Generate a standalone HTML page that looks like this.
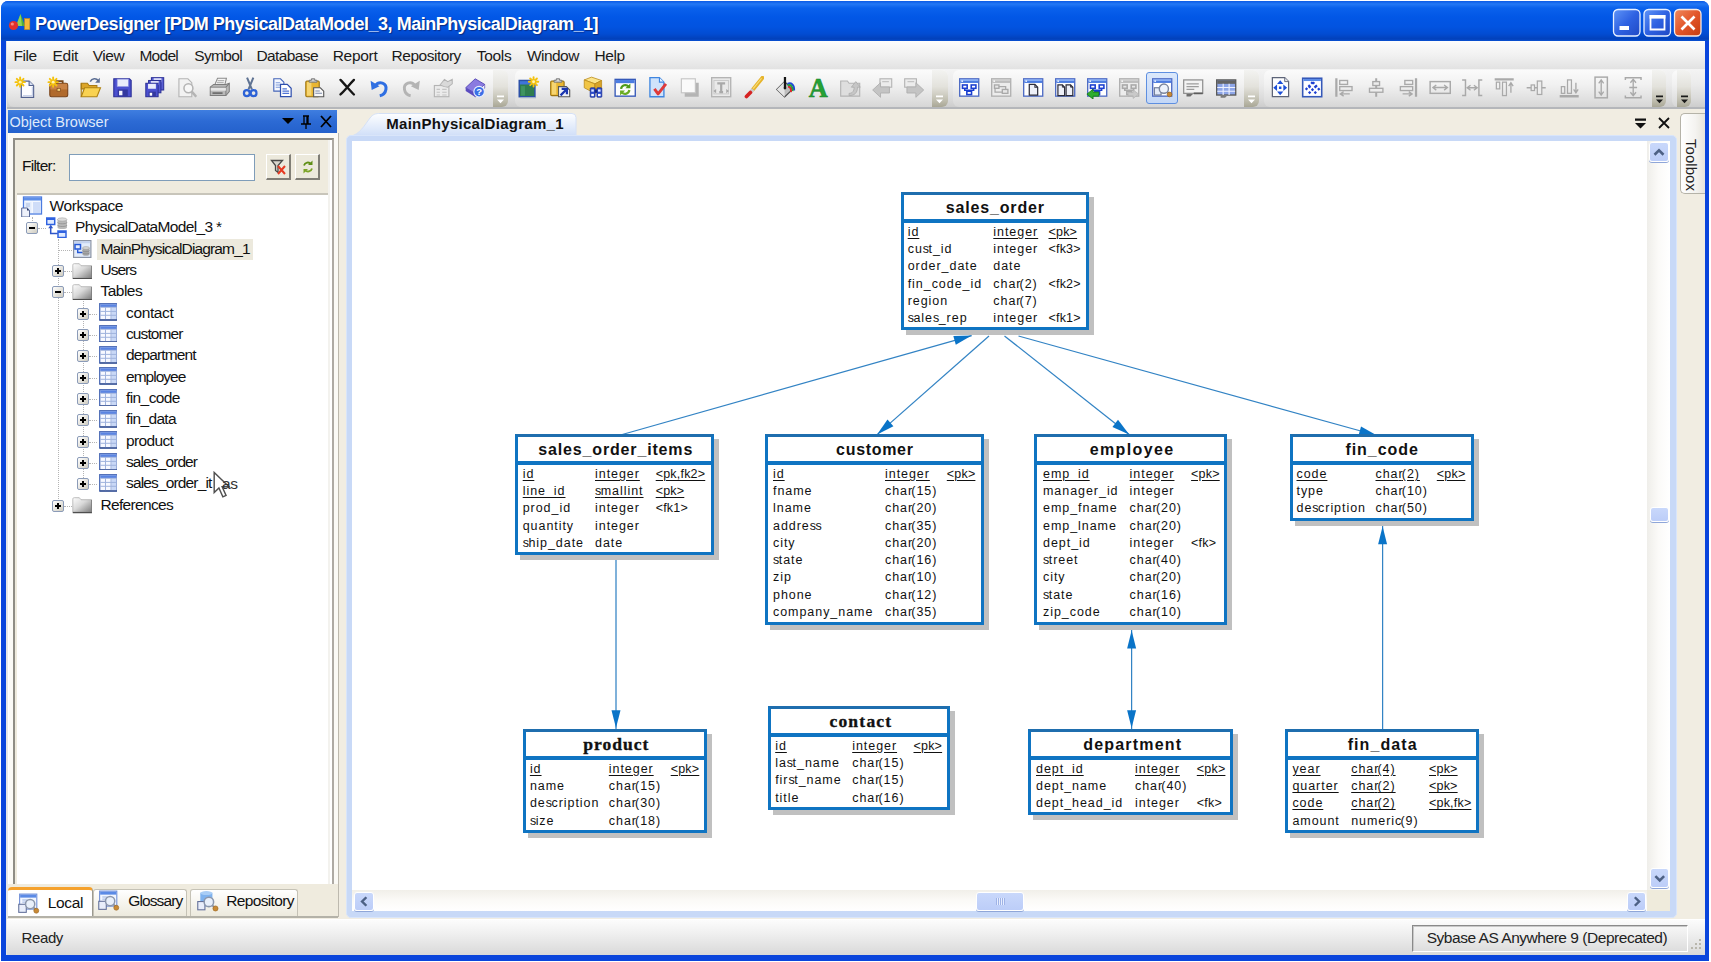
<!DOCTYPE html>
<html><head><meta charset="utf-8"><title>PowerDesigner</title>
<style>
*{box-sizing:border-box;margin:0;padding:0}
html,body{width:1711px;height:962px;overflow:hidden;background:#fff;font-family:"Liberation Sans",sans-serif;}
.a{position:absolute}
#win{position:absolute;left:1px;top:1px;width:1708px;height:959.5px;background:#0a45dc;border-radius:7px 7px 0 0;overflow:hidden}
#title{position:absolute;left:0;top:0;width:1708px;height:40px;background:linear-gradient(#0a5ae6 0px,#2478f4 3px,#0a61ec 7px,#0257e6 16px,#0253e0 26px,#024cd2 33px,#0240ba 38px,#0a52d4 40px);}
#title .t{position:absolute;left:34px;top:13px;font-weight:bold;font-size:18px;color:#fff;letter-spacing:-0.487px;white-space:nowrap;text-shadow:1px 1px 1px #0a2a80;}
#client{position:absolute;left:6px;top:40px;width:1698px;height:914px;background:#f1ede2}
#menu{position:absolute;left:0;top:0;width:1698px;height:28px;background:linear-gradient(#fdfdfd,#f1f1f1 50%,#e2e2e2);}
#menu span{position:absolute;top:6px;font-size:15.5px;color:#1a1a1a;white-space:nowrap;letter-spacing:-0.2px}
#tb{position:absolute;left:0;top:28px;width:1698px;height:40px;background:linear-gradient(#f4f4f4,#ebebeb 40%,#dcdcdc 75%,#cdcdcd);border-bottom:2px solid #b4b6ba}
.tbg{position:absolute;top:1px;height:37px;border-radius:6px;background:linear-gradient(#fbfbfb,#f1f1f1 40%,#e2e2e2 75%,#d6d6d6)}
.ovf{position:absolute;top:1px;height:37px;width:15px;border-radius:0 6px 6px 0;background:linear-gradient(#f3f3f1,#e3e2dc 45%,#c2c0b2 80%,#a9a796)}
</style></head><body>
<div id="win">
<div id="title">
<svg class="a" style="left:7px;top:11px" width="24" height="22" viewBox="0 0 24 22"><path d="M12.500 2l4.500 12h-9z" fill="#4fae3a"/><path d="M12.500 2l1.500 12h-6z" fill="#8fd45a"/><rect x="16.600" y="6.600" width="5.200" height="11" fill="#f5b93a" stroke="#c98a1a" stroke-width=".6"/><circle cx="5.500" cy="13.500" r="4.600" fill="#e0302c"/><circle cx="4.300" cy="12" r="1.600" fill="#f58a80"/></svg>
<svg class="a" style="left:1611px;top:7px" width="94" height="32" viewBox="0 0 94 32"><defs><linearGradient id="bb" x1="0" y1="0" x2="1" y2="1"><stop offset="0" stop-color="#5f95f8"/><stop offset=".5" stop-color="#2f62e2"/><stop offset="1" stop-color="#1f49c4"/></linearGradient><linearGradient id="rb" x1="0" y1="0" x2="1" y2="1"><stop offset="0" stop-color="#f08a5e"/><stop offset=".5" stop-color="#e2562a"/><stop offset="1" stop-color="#c63c10"/></linearGradient></defs>
<rect x="1.500" y="1.500" width="26.500" height="26.500" rx="4.500" fill="url(#bb)" stroke="#e9f1ff" stroke-width="1.300"/><rect x="7.500" y="18" width="9.500" height="4" fill="#fff"/>
<rect x="32" y="1.500" width="26.500" height="26.500" rx="4.500" fill="url(#bb)" stroke="#e9f1ff" stroke-width="1.300"/><path d="M38.500 8h14v13.500h-14z" fill="none" stroke="#fff" stroke-width="1.800"/><rect x="37.600" y="7" width="15.800" height="3.600" fill="#fff"/>
<rect x="62.500" y="1.500" width="26.500" height="26.500" rx="4.500" fill="url(#rb)" stroke="#f8ece6" stroke-width="1.300"/><path d="M69.500 8.500l13 13M82.500 8.500l-13 13" stroke="#fff" stroke-width="2.700"/></svg>
<div class="t" id="ttext">PowerDesigner [PDM PhysicalDataModel_3, MainPhysicalDiagram_1]</div></div>
<div id="client">
<div class="a" style="left:-1px;top:0;width:2px;height:914px;background:#e6e6e6"></div>
<div id="menu">
<span style="left:6.5px;letter-spacing:-0.421px">File</span><span style="left:45.4px;letter-spacing:-0.23px">Edit</span><span style="left:85.8px;letter-spacing:-0.507px">View</span><span style="left:132.4px;letter-spacing:-0.704px">Model</span><span style="left:187.2px;letter-spacing:-0.615px">Symbol</span><span style="left:249.5px;letter-spacing:-0.607px">Database</span><span style="left:325.7px;letter-spacing:-0.305px">Report</span><span style="left:384.5px;letter-spacing:-0.469px">Repository</span><span style="left:469.8px;letter-spacing:-0.318px">Tools</span><span style="left:519.9px;letter-spacing:-0.523px">Window</span><span style="left:587.6px;letter-spacing:-0.473px">Help</span></div>
<div id="tb">
<div class="tbg" style="left:1px;width:499px"></div><div class="tbg" style="left:508px;width:432.5px"></div><div class="tbg" style="left:946px;width:305.5px"></div><div class="tbg" style="left:1257px;width:402px"></div><div class="tbg" style="left:1665px;width:19px"></div><div class="ovf" style="left:486px;width:14.5px"><svg width="15" height="12" viewBox="0 0 15 12" style="position:absolute;left:0;bottom:2px"><path d="M4 2.500h7v1.800h-7zM4 6.500h7l-3.500 3.800z" fill="#fff"/></svg></div><div class="ovf" style="left:925px;width:15.5px"><svg width="15" height="12" viewBox="0 0 15 12" style="position:absolute;left:0;bottom:2px"><path d="M4 2.500h7v1.800h-7zM4 6.500h7l-3.500 3.800z" fill="#fff"/></svg></div><div class="ovf" style="left:1236.5px;width:15.0px"><svg width="15" height="12" viewBox="0 0 15 12" style="position:absolute;left:0;bottom:2px"><path d="M4 2.500h7v1.800h-7zM4 6.500h7l-3.500 3.800z" fill="#fff"/></svg></div><div class="ovf" style="left:1644.5px;width:14.5px"><svg width="15" height="12" viewBox="0 0 15 12" style="position:absolute;left:0;bottom:2px"><path d="M4 2.500h7v1.800h-7zM4 6.500h7l-3.500 3.800z" fill="#1a1a1a"/></svg></div><div class="ovf" style="left:1669.5px;width:14.5px"><svg width="15" height="12" viewBox="0 0 15 12" style="position:absolute;left:0;bottom:2px"><path d="M4 2.500h7v1.800h-7zM4 6.500h7l-3.500 3.800z" fill="#1a1a1a"/></svg></div><div class="a" style="left:1138.5px;top:3px;width:32px;height:32px;border:1.5px solid #5e8fe0;border-radius:3px;background:linear-gradient(#dbe8fb,#c3d7f7)"></div><svg class="a" style="left:7.300000000000001px;top:7.3px" width="22.4" height="22.4" viewBox="0 0 20 20"><path d="M6.5 4.5h7l4 4v10.5h-11z" fill="#fdfdff" stroke="#53628f" stroke-width="1.1"/><path d="M13.5 4.5v4h4" fill="#d8e0f2" stroke="#53628f" stroke-width="1"/><path d="M8 17.5h8.5v-8" stroke="#c9d2e8" stroke-width="1.2" fill="none"/><g stroke="#f4c20d" stroke-width="1.7" stroke-linecap="round"><path d="M5.5 1.2999999999999998V9.7M1.2999999999999998 5.5H9.7M2.5 2.5L8.5 8.5M8.5 2.5L2.5 8.5"/></g><circle cx="5.5" cy="5.5" r="1.3" fill="#fff3b0"/></svg><svg class="a" style="left:40.3px;top:7.3px" width="22.4" height="22.4" viewBox="0 0 20 20"><path d="M7.5 7V4.6h6.5V7" stroke="#7a4a1c" stroke-width="1.6" fill="none"/><rect x="2.5" y="6.5" width="16" height="12" rx="1.5" fill="#b06a2c" stroke="#7a441a" stroke-width="1"/><rect x="3" y="7" width="15" height="5" fill="#c98346"/><rect x="9" y="11" width="3" height="2.6" fill="#f3d27a" stroke="#7a441a" stroke-width=".6"/><g stroke="#f4c20d" stroke-width="1.7" stroke-linecap="round"><path d="M5.5 1.2999999999999998V9.7M1.2999999999999998 5.5H9.7M2.5 2.5L8.5 8.5M8.5 2.5L2.5 8.5"/></g><circle cx="5.5" cy="5.5" r="1.3" fill="#fff3b0"/></svg><svg class="a" style="left:72.3px;top:7.3px" width="22.4" height="22.4" viewBox="0 0 20 20"><path d="M2 6.5h5.5l1.5 2H16v3H2z" fill="#dca528" stroke="#a97a10" stroke-width=".9"/><path d="M2 18.5l3-8h14.2l-3.2 8z" fill="#f9d251" stroke="#b08312" stroke-width="1"/><path d="M2 18.5v-12" stroke="#a97a10" stroke-width="1"/><path d="M10 5c1.5-3 5.5-3.4 7.3-.7" stroke="#5d6f94" stroke-width="1.4" fill="none"/><path d="M18.6 1.6v4.4h-4.2z" fill="#5d6f94"/></svg><svg class="a" style="left:104.3px;top:7.3px" width="22.4" height="22.4" viewBox="0 0 20 20"><path d="M2.5 2.5h14l1.5 1.5v14.5h-15.5z" fill="#4b50cf" stroke="#2b2f96" stroke-width="1"/><rect x="5.5" y="2.8" width="10" height="6.7" fill="#e9ebfb" stroke="#8d92e0" stroke-width=".6"/><rect x="6" y="12" width="9" height="6.3" fill="#33389f"/><rect x="7.2" y="13.2" width="3" height="4" fill="#f4f4ff"/></svg><svg class="a" style="left:136.3px;top:7.3px" width="22.4" height="22.4" viewBox="0 0 20 20"><rect x="7.5" y="1.5" width="11" height="11" fill="#5a5fd4" stroke="#2b2f96" stroke-width=".9"/><rect x="9.5" y="2" width="7" height="3.6" fill="#dfe1fa"/><rect x="5" y="4" width="11" height="11" fill="#5257d0" stroke="#2b2f96" stroke-width=".9"/><rect x="7" y="4.5" width="7" height="3.6" fill="#dfe1fa"/><rect x="2.5" y="6.5" width="11" height="12" fill="#4b50cf" stroke="#2b2f96" stroke-width=".9"/><rect x="4.5" y="7" width="7" height="4.4" fill="#e9ebfb"/><rect x="5" y="14" width="6.5" height="4.3" fill="#33389f"/><rect x="6" y="15" width="2.2" height="2.6" fill="#fff"/></svg><svg class="a" style="left:168.3px;top:7.3px" width="22.4" height="22.4" viewBox="0 0 20 20"><path d="M3.5 2.5h8l3.5 3.5v12.5h-11.5z" fill="#f2f2f2" stroke="#b4b4b4" stroke-width="1"/><circle cx="12" cy="11" r="4" fill="#f7f7f7" stroke="#b4b4b4" stroke-width="1.4"/><path d="M15 14l4 4.5" stroke="#b4b4b4" stroke-width="2.2"/></svg><svg class="a" style="left:200.8px;top:7.3px" width="22.4" height="22.4" viewBox="0 0 20 20"><path d="M6 8l2.5-6h8l-1.5 6z" fill="#f4f4f4" stroke="#8a8a8a" stroke-width=".9"/><path d="M8.5 4.2h6M8 6h6" stroke="#9a9a9a" stroke-width=".8"/><path d="M2 10l3-2.5h11l3 -1v7.5l-3 3.5h-14z" fill="#b9b9b9" stroke="#7d7d7d" stroke-width=".9"/><path d="M2 10h14v7.5M16 10l3-3.4" stroke="#7d7d7d" stroke-width=".9" fill="none"/><rect x="2.5" y="10.5" width="13.5" height="2.6" fill="#e6e6e6"/><rect x="4" y="14.5" width="9" height="1.6" fill="#6f6f6f"/></svg><svg class="a" style="left:232.3px;top:7.3px" width="22.4" height="22.4" viewBox="0 0 20 20"><path d="M7.2 1.5l4.3 10.5M12.8 1.5L8.5 12" stroke="#5f7393" stroke-width="1.8" fill="none"/><circle cx="7" cy="15.3" r="2.6" fill="none" stroke="#2d62d6" stroke-width="2"/><circle cx="13" cy="15.3" r="2.6" fill="none" stroke="#2d62d6" stroke-width="2"/></svg><svg class="a" style="left:264.3px;top:7.3px" width="22.4" height="22.4" viewBox="0 0 20 20"><path d="M2.5 2.5h6l3 3v8h-9z" fill="#f5f8ff" stroke="#4464b8" stroke-width="1"/><path d="M4.2 6h4M4.2 8h5M4.2 10h5" stroke="#7f9ada" stroke-width=".9"/><path d="M8.5 7.5h6l3.5 3.5v7.5h-9.5z" fill="#fff" stroke="#2f4fae" stroke-width="1.1"/><path d="M10.2 11.5h4M10.2 13.5h6M10.2 15.5h6" stroke="#4f74d6" stroke-width="1"/></svg><svg class="a" style="left:296.3px;top:7.3px" width="22.4" height="22.4" viewBox="0 0 20 20"><rect x="2.5" y="4.5" width="12" height="14" rx="1" fill="#e9b632" stroke="#9c7412" stroke-width="1"/><rect x="3.5" y="5.5" width="4" height="12" fill="#f6d572"/><path d="M5.5 5.5V3.8h2V2.5h3v1.3h2v1.7z" fill="#d0d0d0" stroke="#6e6e6e" stroke-width=".8"/><path d="M9.5 10.5h6l3 3v5h-9z" fill="#f8f8f8" stroke="#585858" stroke-width="1"/><path d="M11 13.5h4M11 15.5h6" stroke="#7b88a8" stroke-width=".9"/></svg><svg class="a" style="left:329.3px;top:7.3px" width="22.4" height="22.4" viewBox="0 0 20 20"><path d="M4 3.5c4 4 8 9 12 13M16 3.5C11.500 8 8 13 4 16.500" stroke="#161616" stroke-width="2.1" fill="none" stroke-linecap="round"/></svg><svg class="a" style="left:361.3px;top:7.3px" width="22.4" height="22.4" viewBox="0 0 20 20"><path d="M6.5 8.500c3.500-4.500 10.500-2.500 9.500 3.500c-.5 3-2.700 5-5.500 5.600" stroke="#2f6fe2" stroke-width="2.7" fill="none"/><path d="M2.300 4.200l1 8.200l7-3.300z" fill="#2f6fe2"/></svg><svg class="a" style="left:392.8px;top:7.3px" width="22.4" height="22.4" viewBox="0 0 20 20"><path d="M13.500 8.500c-3.500-4.500-10.500-2.500-9.500 3.500c.5 3 2.700 5 5.500 5.600" stroke="#b4b4b4" stroke-width="2.600" fill="none"/><path d="M17.700 4.200l-1 8.200l-7-3.300z" fill="#b4b4b4"/></svg><svg class="a" style="left:424.3px;top:7.3px" width="22.4" height="22.4" viewBox="0 0 20 20"><rect x="3" y="8.500" width="13" height="10" fill="#ebebeb" stroke="#b4b4b4" stroke-width="1"/><path d="M5 12h3M10 12h4M5 14.500h3M10 14.500h4M5 17h3M10 17h4" stroke="#c4c4c4" stroke-width="1"/><path d="M8 8l4-5 3 2 4-2v4l-4 3-3-.5z" fill="#d9d9d9" stroke="#b4b4b4" stroke-width=".9"/></svg><svg class="a" style="left:457.3px;top:7.3px" width="22.4" height="22.4" viewBox="0 0 20 20"><path d="M1.500 10.500l8.500-8 8.500 5-8.500 8z" fill="#8a7be0" stroke="#5546b4" stroke-width=".8"/><path d="M1.500 10.500v2.800l8.500 5.500v-3.300z" fill="#5b4cc0"/><path d="M10 15.500v3.300l8.500-8v-3.300z" fill="#efeefa" stroke="#5546b4" stroke-width=".6"/><circle cx="13.500" cy="14" r="4.700" fill="#3b6fe6" stroke="#e8efff" stroke-width="1"/><text x="13.500" y="17.300" font-family="Liberation Sans,sans-serif" font-weight="bold" font-size="8.500" fill="#fff" text-anchor="middle">?</text></svg><svg class="a" style="left:510.29999999999995px;top:7.3px" width="22.4" height="22.4" viewBox="0 0 20 20"><rect x="2" y="4" width="14" height="14.500" fill="#2f7d4f" stroke="#2b4fa8" stroke-width="1.3"/><rect x="2.600" y="4.600" width="12.800" height="3" fill="#3f73dc"/><rect x="3.600" y="9" width="3.500" height="8.500" fill="#3f9461"/><path d="M3 19.300h14" stroke="#9fb0c8" stroke-width="1"/><g stroke="#f4c20d" stroke-width="1.7" stroke-linecap="round"><path d="M14.8 1.0V9.4M10.600000000000001 5.2H19.0M11.8 2.2L17.8 8.2M17.8 2.2L11.8 8.2"/></g><circle cx="14.8" cy="5.2" r="1.3" fill="#fff3b0"/></svg><svg class="a" style="left:542.3px;top:7.3px" width="22.4" height="22.4" viewBox="0 0 20 20"><rect x="1.500" y="4.500" width="12" height="13" rx="1" fill="#e9b632" stroke="#9c7412" stroke-width="1"/><rect x="2.500" y="5.500" width="4" height="11" fill="#f6d572"/><path d="M4.500 5.500V3.800h2V2.500h3v1.300h2v1.700z" fill="#d8d8d8" stroke="#6e6e6e" stroke-width=".8"/><path d="M8.500 9.500h7l3 3v6h-10z" fill="#eef1f8" stroke="#585858" stroke-width="1"/><path d="M10.300 17.300l5.500-5.500M11.300 11.500h4.700v4.700" stroke="#1b36b0" stroke-width="2" fill="none"/></svg><svg class="a" style="left:575.3px;top:7.3px" width="22.4" height="22.4" viewBox="0 0 20 20"><path d="M2 3.500l6.500-2.500 9 3-6 3z" fill="#fbe48a" stroke="#b8891a" stroke-width=".7"/><path d="M2 3.500v7l9.500 5v-8.500z" fill="#f1c545" stroke="#b8891a" stroke-width=".7"/><path d="M11.500 7l6-3v7.500l-6 4z" fill="#d9a428" stroke="#b8891a" stroke-width=".7"/><rect x="7.300" y="10.500" width="4.400" height="8.500" rx=".8" fill="#2b4bcb" stroke="#16288a" stroke-width=".6"/><rect x="13.300" y="10.500" width="4.400" height="8.500" rx=".8" fill="#2b4bcb" stroke="#16288a" stroke-width=".6"/><rect x="11.500" y="12" width="2" height="3" fill="#16288a"/><rect x="8.300" y="12" width="2.300" height="2" fill="#dfe8ff"/><rect x="14.300" y="12" width="2.300" height="2" fill="#dfe8ff"/><rect x="8.300" y="16" width="2.300" height="2" fill="#fff"/><rect x="14.300" y="16" width="2.300" height="2" fill="#fff"/></svg><svg class="a" style="left:607.3px;top:7.3px" width="22.4" height="22.4" viewBox="0 0 20 20"><rect x="1" y="3" width="18" height="15" fill="#fdfdfd" stroke="#3558b8" stroke-width="1.2"/><rect x="1.600" y="3.600" width="16.800" height="2.800" fill="#4b7ce2"/><path d="M6.300 11.500a3.900 3.900 0 0 1 6.700-2.200" stroke="#4f9a1a" stroke-width="2" fill="none"/><path d="M14.600 6.600v4.400h-4.400z" fill="#4f9a1a"/><path d="M13.700 12.500a3.900 3.900 0 0 1-6.700 2.200" stroke="#6aac22" stroke-width="2" fill="none"/><path d="M5.400 17.400v-4.400h4.400z" fill="#6aac22"/></svg><svg class="a" style="left:639.3px;top:7.3px" width="22.4" height="22.4" viewBox="0 0 20 20"><path d="M3.500 1.500h8.500l4 4v13h-12.500z" fill="#cfe2fb" stroke="#3f86e0" stroke-width="1.200"/><path d="M12 1.500v4h4" fill="#eaf3ff" stroke="#3f86e0" stroke-width="1"/><path d="M7.500 11.500l3.300 4.500l7-9" stroke="#df3a3a" stroke-width="2.600" fill="none" stroke-linejoin="round"/></svg><svg class="a" style="left:671.3px;top:7.3px" width="22.4" height="22.4" viewBox="0 0 20 20"><path d="M6 6h12.500v12.500H6z" fill="#b4b4b4"/><rect x="3" y="2.500" width="12.500" height="12.500" fill="#fafafa" stroke="#c4c4c4" stroke-width="1"/></svg><svg class="a" style="left:703.3px;top:7.3px" width="22.4" height="22.4" viewBox="0 0 20 20"><rect x="1.500" y="1.500" width="17" height="17" fill="#e9e9e9" stroke="#b4b4b4" stroke-width="1.200"/><rect x="3.500" y="4" width="13" height="12" fill="none" stroke="#cacaca" stroke-width=".9"/><path d="M6.500 6.500h7M10 6.500v8M8.300 14.500h3.400" stroke="#a9a9a9" stroke-width="2" fill="none"/><path d="M3 13.500l2.500-1.800v3.600zM17 13.500l-2.500-1.800v3.600z" fill="#a9a9a9"/></svg><svg class="a" style="left:734.8px;top:7.3px" width="22.4" height="22.4" viewBox="0 0 20 20"><path d="M18.300 1.500L9.800 12" stroke="#e6b42c" stroke-width="3.400" stroke-linecap="round"/><path d="M17.500 2L10 11.300" stroke="#f7dc7a" stroke-width="1"/><path d="M9.800 12L7.800 14.500" stroke="#c9c9c9" stroke-width="3.200"/><path d="M7.500 14.700L4 18.300" stroke="#d62323" stroke-width="3.300" stroke-linecap="round"/></svg><svg class="a" style="left:767.3px;top:7.3px" width="22.4" height="22.4" viewBox="0 0 20 20"><path d="M2.500 12l7-7 7 7-7 6.700z" fill="#bdbdbd" stroke="#4b4b4b" stroke-width="1"/><path d="M2.500 12l7-7v13.700z" fill="#e4e4e4"/><path d="M9.800 1v9.500" stroke="#151515" stroke-width="2"/><circle cx="9.800" cy="10.800" r="1.200" fill="#151515"/><path d="M12 7c3.500-1.500 6.300 1 6 6" stroke="#1f49d6" stroke-width="1.700" fill="none"/><path d="M12.300 8.300c2.700-.8 4.500 1 4.300 5.200" stroke="#23a23a" stroke-width="1.700" fill="none"/><path d="M12.600 9.800c1.800-.3 2.800 1 2.600 4.600" stroke="#d92a2a" stroke-width="1.700" fill="none"/></svg><svg class="a" style="left:800.3px;top:7.3px" width="22.4" height="22.4" viewBox="0 0 20 20"><text x="10" y="18.300" font-family="Liberation Serif,serif" font-weight="bold" font-size="23.500" fill="#25a236" stroke="#188226" stroke-width=".5" text-anchor="middle">A</text></svg><svg class="a" style="left:832.3px;top:7.3px" width="22.4" height="22.4" viewBox="0 0 20 20"><path d="M1.500 4.500h6l1.500 2h9.500v11.500h-17z" fill="#dedede" stroke="#b4b4b4" stroke-width="1"/><path d="M9 15.500c3 0 4.500-2 4.500-5.500h-2.500l4-5 4 5h-2.500c0 5-2.500 7.500-7.500 7.500z" fill="#c6c6c6" stroke="#ababab" stroke-width=".7"/></svg><svg class="a" style="left:864.3px;top:7.3px" width="22.4" height="22.4" viewBox="0 0 20 20"><rect x="8" y="2.500" width="10.500" height="7.500" fill="#ececec" stroke="#b4b4b4" stroke-width="1"/><path d="M10 5h6" stroke="#c4c4c4" stroke-width="1.200"/><path d="M1.500 12.500l7-6.500v3.800h8v5.400h-8v3.800z" fill="#c4c4c4" stroke="#aeaeae" stroke-width=".8"/></svg><svg class="a" style="left:896.3px;top:7.3px" width="22.4" height="22.4" viewBox="0 0 20 20"><rect x="1.500" y="2.500" width="10.500" height="7.500" fill="#ececec" stroke="#b4b4b4" stroke-width="1"/><path d="M4 5h6" stroke="#c4c4c4" stroke-width="1.200"/><path d="M18.500 12.500l-7-6.500v3.800h-8v5.400h8v3.800z" fill="#c4c4c4" stroke="#aeaeae" stroke-width=".8"/></svg><svg class="a" style="left:951.3px;top:7.3px" width="22.4" height="22.4" viewBox="0 0 20 20"><rect x="1.5" y="2.5" width="17" height="15.5" fill="#fff" stroke="#4f6cc4" stroke-width="1.2"/><rect x="2" y="3" width="16" height="3.2" fill="#4c7ce0"/><rect x="2" y="3" width="16" height="1.4" fill="#8fb2f5"/><rect x="3" y="4" width="1.5" height="1.2" fill="#fff"/><path d="M6 11v1.8h8V11M10 12.8v1.5" stroke="#1b3fd0" stroke-width="1.3" fill="none"/><rect x="4" y="8" width="4.2" height="3" fill="#fff" stroke="#1b3fd0" stroke-width="1.4"/><rect x="11.8" y="8" width="4.2" height="3" fill="#fff" stroke="#1b3fd0" stroke-width="1.4"/><rect x="7.9" y="13.6" width="4.2" height="3" fill="#fff" stroke="#1b3fd0" stroke-width="1.4"/></svg><svg class="a" style="left:983.3px;top:7.3px" width="22.4" height="22.4" viewBox="0 0 20 20"><rect x="1.5" y="2.5" width="17" height="15.5" fill="#ececec" stroke="#b0b0b0" stroke-width="1.2"/><rect x="2" y="3" width="16" height="3.2" fill="#bdbdbd"/><rect x="2" y="3" width="16" height="1.4" fill="#cfcfcf"/><rect x="3" y="4" width="1.5" height="1.2" fill="#fff"/><rect x="4" y="8" width="4" height="3" fill="#e6e6e6" stroke="#a9a9a9" stroke-width="1.200"/><rect x="11" y="12" width="5" height="3.500" fill="#e6e6e6" stroke="#a9a9a9" stroke-width="1.200"/><path d="M8 9.500h6v2.500M4.500 11v3.500h6.500" stroke="#a9a9a9" stroke-width="1.100" fill="none"/></svg><svg class="a" style="left:1015.3px;top:7.3px" width="22.4" height="22.4" viewBox="0 0 20 20"><rect x="1.5" y="2.5" width="17" height="15.5" fill="#fff" stroke="#4f6cc4" stroke-width="1.2"/><rect x="2" y="3" width="16" height="3.2" fill="#4c7ce0"/><rect x="2" y="3" width="16" height="1.4" fill="#8fb2f5"/><rect x="3" y="4" width="1.5" height="1.2" fill="#fff"/><path d="M6.500 7.500h5l2.500 2.500v7h-7.500z" fill="#eef0f8" stroke="#2c2c3a" stroke-width="1.100"/><path d="M11.500 7.500v2.500h2.500" fill="none" stroke="#2c2c3a" stroke-width=".9"/></svg><svg class="a" style="left:1047.3px;top:7.3px" width="22.4" height="22.4" viewBox="0 0 20 20"><rect x="1.5" y="2.5" width="17" height="15.5" fill="#fff" stroke="#4f6cc4" stroke-width="1.2"/><rect x="2" y="3" width="16" height="3.2" fill="#4c7ce0"/><rect x="2" y="3" width="16" height="1.4" fill="#8fb2f5"/><rect x="3" y="4" width="1.5" height="1.2" fill="#fff"/><path d="M3.500 8h4l2 2v7.500h-6z" fill="#eef0f8" stroke="#2c2c3a" stroke-width="1.100"/><path d="M10.800 8h4l2 2v7.500h-6z" fill="#eef0f8" stroke="#2c2c3a" stroke-width="1.100"/><path d="M7.500 8v2h2M14.800 8v2h2" fill="none" stroke="#2c2c3a" stroke-width=".8"/></svg><svg class="a" style="left:1079.3px;top:7.3px" width="22.4" height="22.4" viewBox="0 0 20 20"><rect x="1.5" y="2.5" width="17" height="15.5" fill="#fff" stroke="#4f6cc4" stroke-width="1.2"/><rect x="2" y="3" width="16" height="3.2" fill="#4c7ce0"/><rect x="2" y="3" width="16" height="1.4" fill="#8fb2f5"/><rect x="3" y="4" width="1.5" height="1.2" fill="#fff"/><path d="M6 11v1.8h8V11M10 12.8v1.5" stroke="#1b3fd0" stroke-width="1.3" fill="none"/><rect x="4" y="8" width="4.2" height="3" fill="#fff" stroke="#1b3fd0" stroke-width="1.4"/><rect x="11.8" y="8" width="4.2" height="3" fill="#fff" stroke="#1b3fd0" stroke-width="1.4"/><rect x="7.9" y="13.6" width="4.2" height="3" fill="#fff" stroke="#1b3fd0" stroke-width="1.4"/><path d="M.8 16.200l5.500-4.400v2.600h5.200v3.600h-5.200v2.600z" fill="#2fae2f" stroke="#1b7c1b" stroke-width=".8"/></svg><svg class="a" style="left:1111.3px;top:7.3px" width="22.4" height="22.4" viewBox="0 0 20 20"><rect x="1.5" y="2.5" width="17" height="15.5" fill="#ececec" stroke="#b0b0b0" stroke-width="1.2"/><rect x="2" y="3" width="16" height="3.2" fill="#bdbdbd"/><rect x="2" y="3" width="16" height="1.4" fill="#cfcfcf"/><rect x="3" y="4" width="1.5" height="1.2" fill="#fff"/><path d="M6 11v1.8h8V11M10 12.8v1.5" stroke="#a9a9a9" stroke-width="1.3" fill="none"/><rect x="4" y="8" width="4.2" height="3" fill="#e6e6e6" stroke="#a9a9a9" stroke-width="1.4"/><rect x="11.8" y="8" width="4.2" height="3" fill="#e6e6e6" stroke="#a9a9a9" stroke-width="1.4"/><rect x="7.9" y="13.6" width="4.2" height="3" fill="#e6e6e6" stroke="#a9a9a9" stroke-width="1.4"/><path d="M18.500 16.200l-5 -3.800v2.300h-4.500v3h4.500v2.300z" fill="#c9c9c9" stroke="#b4b4b4" stroke-width=".7"/></svg><svg class="a" style="left:1143.8px;top:7.3px" width="22.4" height="22.4" viewBox="0 0 20 20"><rect x="1.5" y="2.5" width="17" height="15.5" fill="#fff" stroke="#4f6cc4" stroke-width="1.2"/><rect x="2" y="3" width="16" height="3.2" fill="#4c7ce0"/><rect x="2" y="3" width="16" height="1.4" fill="#8fb2f5"/><rect x="3" y="4" width="1.5" height="1.2" fill="#fff"/><rect x="3" y="10.500" width="6" height="6.500" fill="#e4ebf8" stroke="#6b7896" stroke-width="1"/><circle cx="11.500" cy="11.300" r="4.100" fill="#edf3fc" stroke="#7c879e" stroke-width="1.300"/><path d="M14.500 14.300l2 2" stroke="#7c879e" stroke-width="1.800"/><circle cx="16.600" cy="16.500" r="2.100" fill="#c98a35" stroke="#9b651c" stroke-width=".6"/></svg><svg class="a" style="left:1175.3px;top:7.3px" width="22.4" height="22.4" viewBox="0 0 20 20"><path d="M4 15.500h6.500l-3 2.800h-3.500z" fill="#6e6e6e"/><rect x="1.500" y="3.500" width="17" height="12" fill="#f3f3f3" stroke="#8f8f8f" stroke-width="1.100"/><path d="M4 7h11M4 9.500h11M4 12h7" stroke="#9d9d9d" stroke-width="1"/><path d="M18.500 15.500h-8" stroke="#5c5c5c" stroke-width="1.400"/></svg><svg class="a" style="left:1207.8px;top:7.3px" width="22.4" height="22.4" viewBox="0 0 20 20"><rect x="1.500" y="3.500" width="17" height="13.500" fill="#8ea6e8" stroke="#5a5a5a" stroke-width="1.200"/><rect x="2" y="4" width="16" height="3" fill="#646464"/><path d="M2 10.300h16M2 13.600h16M7.300 7v10M12.600 7v10" stroke="#eef2ff" stroke-width="1"/><path d="M5 17.500h6l-2 2h-4z" fill="#7b7b7b"/></svg><svg class="a" style="left:1262.3px;top:7.3px" width="22.4" height="22.4" viewBox="0 0 20 20"><path d="M3 1.500h11l3.500 3.500v13.500h-14.500z" fill="#fdfdfd" stroke="#5d6478" stroke-width="1.100"/><path d="M14 1.500v3.500h3.500" fill="#e8e8ee" stroke="#5d6478" stroke-width=".8"/><path d="M10 3.800l2.800 3.400h-5.600zM10 17.200l2.800-3.400h-5.600zM3.800 10.500l3.400-2.800v5.600zM16.200 10.500l-3.400-2.800v5.600z" fill="#1c4fd8"/><rect x="8.900" y="9.400" width="2.200" height="2.200" fill="#1c4fd8"/></svg><svg class="a" style="left:1294.3px;top:7.3px" width="22.4" height="22.4" viewBox="0 0 20 20"><rect x="1.500" y="2" width="17" height="16.500" fill="#fdfdff" stroke="#3558b8" stroke-width="1.400"/><rect x="2.200" y="2.700" width="15.600" height="1.800" fill="#5a8ae8"/><path d="M10.500 5.500L3.500 13M10.500 5.500l6.500 7.500M7 9l7.500 7.500M13.500 9l-7 7" stroke="#1d3fd2" stroke-width="2.100" stroke-dasharray="2 1.600" fill="none"/></svg><svg class="a" style="left:1326.3px;top:7.3px" width="22.4" height="22.4" viewBox="0 0 20 20"><path d="M3 2v16.500" stroke="#a9a9a9" stroke-width="2"/><rect x="6" y="4" width="7" height="3.500" fill="none" stroke="#a9a9a9" stroke-width="1.200"/><rect x="6" y="9.500" width="11" height="3.500" fill="none" stroke="#a9a9a9" stroke-width="1.200"/><path d="M15 16h-8M9.500 14l-3 2 3 2" stroke="#a9a9a9" stroke-width="1.200" fill="none"/></svg><svg class="a" style="left:1358.3px;top:7.3px" width="22.4" height="22.4" viewBox="0 0 20 20"><path d="M10 2v16.500" stroke="#a9a9a9" stroke-width="1.800"/><rect x="7" y="5" width="6" height="3.500" fill="#ededed" stroke="#a9a9a9" stroke-width="1.200"/><rect x="4" y="11" width="12" height="3.500" fill="#ededed" stroke="#a9a9a9" stroke-width="1.200"/></svg><svg class="a" style="left:1390.3px;top:7.3px" width="22.4" height="22.4" viewBox="0 0 20 20"><path d="M17 2v16.500" stroke="#a9a9a9" stroke-width="2"/><rect x="7" y="4" width="7" height="3.500" fill="none" stroke="#a9a9a9" stroke-width="1.200"/><rect x="3" y="9.500" width="11" height="3.500" fill="none" stroke="#a9a9a9" stroke-width="1.200"/><path d="M5 16h8M10.500 14l3 2-3 2" stroke="#a9a9a9" stroke-width="1.200" fill="none"/></svg><svg class="a" style="left:1422.3px;top:7.3px" width="22.4" height="22.4" viewBox="0 0 20 20"><rect x="1" y="5" width="18" height="10.500" fill="none" stroke="#a9a9a9" stroke-width="1.300"/><path d="M4 10.300h12M6.500 8l-3 2.300 3 2.300M13.500 8l3 2.300-3 2.300" stroke="#a9a9a9" stroke-width="1.200" fill="none"/></svg><svg class="a" style="left:1454.3px;top:7.3px" width="22.4" height="22.4" viewBox="0 0 20 20"><path d="M1 3.500h3v14H1M19 3.500h-3v14h3" stroke="#a9a9a9" stroke-width="1.300" fill="none"/><path d="M6 10.500h8M8.500 8.300l-3 2.200 3 2.200M11.500 8.300l3 2.200-3 2.200" stroke="#a9a9a9" stroke-width="1.200" fill="none"/></svg><svg class="a" style="left:1486.3px;top:7.3px" width="22.4" height="22.4" viewBox="0 0 20 20"><path d="M1.500 3h17" stroke="#a9a9a9" stroke-width="2.200"/><rect x="3" y="5.500" width="3" height="6" fill="none" stroke="#a9a9a9" stroke-width="1.100"/><rect x="8.500" y="5.500" width="3.500" height="12" fill="none" stroke="#a9a9a9" stroke-width="1.100"/><path d="M16 15V6.500M14 9l2-3 2 3" stroke="#a9a9a9" stroke-width="1.200" fill="none"/></svg><svg class="a" style="left:1518.3px;top:7.3px" width="22.4" height="22.4" viewBox="0 0 20 20"><path d="M1.500 10.500h17" stroke="#a9a9a9" stroke-width="1.400"/><rect x="5.500" y="8" width="3" height="5" fill="#ededed" stroke="#a9a9a9" stroke-width="1.100"/><rect x="11" y="4.500" width="4" height="12" fill="#ededed" stroke="#a9a9a9" stroke-width="1.100"/></svg><svg class="a" style="left:1550.8px;top:7.3px" width="22.4" height="22.4" viewBox="0 0 20 20"><path d="M1.500 18h17" stroke="#a9a9a9" stroke-width="2.200"/><rect x="3" y="9.500" width="3" height="6" fill="none" stroke="#a9a9a9" stroke-width="1.100"/><rect x="8.500" y="3.500" width="3.500" height="12" fill="none" stroke="#a9a9a9" stroke-width="1.100"/><path d="M16 6v8.500M14 12l2 3 2-3" stroke="#a9a9a9" stroke-width="1.200" fill="none"/></svg><svg class="a" style="left:1583.3px;top:7.3px" width="22.4" height="22.4" viewBox="0 0 20 20"><rect x="4.500" y="1" width="11" height="18.500" fill="none" stroke="#a9a9a9" stroke-width="1.300"/><path d="M10 4v12.500M7.800 6.500l2.200-3 2.200 3M7.800 14l2.200 3 2.200-3" stroke="#a9a9a9" stroke-width="1.200" fill="none"/></svg><svg class="a" style="left:1615.3px;top:7.3px" width="22.4" height="22.4" viewBox="0 0 20 20"><path d="M3 3.500V1.500h14v2M3 17.500v2h14v-2" stroke="#a9a9a9" stroke-width="1.300" fill="none"/><path d="M10 3v14.500M7.500 6l2.500-3 2.500 3M7.500 14.500l2.500 3 2.500-3M6.500 10.300h7" stroke="#a9a9a9" stroke-width="1.200" fill="none"/></svg></div>
<style>
#ob{position:absolute;left:1px;top:69px;width:328.5px;height:23px;background:linear-gradient(#3f7ee0,#2c6ad4 50%,#2461cc);}
#ob .t{position:absolute;left:1.5px;top:4px;font-size:14.5px;color:#dfe9fb;white-space:nowrap;letter-spacing:-0.009px}
#obp{position:absolute;left:1px;top:92px;width:330.5px;height:784px;background:#fbfaf6;border-left:1px solid #fff;border-right:1.5px solid #bdb9ae}
#obi{position:absolute;left:4px;top:5px;width:321px;height:757px;border:2px solid #8f8d85;border-right:2px solid #aeaaa4;border-bottom:1px solid #fff;background:#efebde}
#tree{position:absolute;left:2px;top:53px;width:311px;height:699px;background:#fff;border-top:2px solid #c8c5ba}
#filt{position:absolute;left:7px;top:17px;font-size:15.5px;color:#111;letter-spacing:-0.75px}
#finp{position:absolute;left:54px;top:14px;width:186px;height:27px;background:#fff;border:1px solid #7f9db9}
.fb{position:absolute;top:14px;width:25px;height:26px;background:#ece9dc;border:1px solid #fff;border-right:2px solid #807e76;border-bottom:2px solid #807e76}
.tr{position:absolute;font-size:15.5px;color:#111;white-space:nowrap;letter-spacing:-0.42px;height:18px;line-height:18px}
.pm{position:absolute;width:12px;height:12px;border:1px solid #8b9bb8;border-radius:2px;background:linear-gradient(135deg,#fff,#cfccc0);}
.pm:before{content:"";position:absolute;left:2px;top:4px;width:6px;height:2px;background:#000}
.pm.p:after{content:"";position:absolute;left:4px;top:2px;width:2px;height:6px;background:#000}
.dv{position:absolute;width:0;border-left:1px dotted #b4b4b4}
.dh{position:absolute;height:0;border-top:1px dotted #b4b4b4}
.btab{position:absolute;top:847px;height:29px;font-size:15px;color:#111;letter-spacing:-0.3px}
</style>
<div id="ob"><div class="t">Object Browser</div>
<svg class="a" style="left:270px;top:3px" width="60" height="18" viewBox="0 0 60 18">
<path d="M4 5h12l-6 6z" fill="#000"/>
<path d="M25 3h6M26 3v8M30 3v8M29 3v8M23 11h10M28 11v5" stroke="#000" stroke-width="1.3" fill="none"/>
<path d="M43 3l10 11M53 3l-10 11" stroke="#000" stroke-width="1.8" fill="none"/>
</svg></div>
<div id="obp"><div id="obi">
<div id="filt">Filter:</div><div id="finp"></div>
<div class="fb" style="left:251px"><svg width="22" height="22" viewBox="0 0 22 22" style="position:absolute;left:1px;top:1px"><path d="M3.500 4.500h11l-4.500 5v7l-2.500-2v-5z" fill="#d9d6cc" stroke="#4a4a48" stroke-width="1.300"/><path d="M10 10l7 8M17 10l-7 8" stroke="#e63a22" stroke-width="2"/></svg></div>
<div class="fb" style="left:280px"><svg width="22" height="22" viewBox="0 0 22 22" style="position:absolute;left:1px;top:1px"><path d="M7 9.500a4 4 0 0 1 7-1.500" stroke="#5f8f16" stroke-width="1.800" fill="none"/><path d="M15.500 4.500v4.500h-4.500z" fill="#5f8f16"/><path d="M15 12.500a4 4 0 0 1-7 1.500" stroke="#7aa326" stroke-width="1.800" fill="none"/><path d="M6.500 17.500v-4.500h4.500z" fill="#7aa326"/></svg></div>
<div class="a" style="left:313px;top:0;width:4px;height:760px;background:linear-gradient(90deg,#f3f2ee 50%,#fff 50%)"></div>
<div id="tree">
<div class="dv" style="left:15px;top:22px;height:6px"></div><div class="dv" style="left:40.5px;top:44px;height:260px"></div><div class="dv" style="left:66px;top:106px;height:177px"></div><div class="dh" style="left:41px;top:54.5px;width:14px"></div><div class="tr" style="left:32.5px;top:2.0px;letter-spacing:-0.406px">Workspace</div><div class="dh" style="left:21px;top:33.233000000000004px;width:8px"></div><div class="pm" style="left:9px;top:27.233000000000004px"></div><div class="tr" style="left:58px;top:23.333px;letter-spacing:-0.66px">PhysicalDataModel_3 *</div><div class="a" style="left:80.3px;top:43.566px;width:156px;height:21px;background:#ece9dd"></div><div class="tr" style="left:83.5px;top:44.666px;letter-spacing:-0.854px">MainPhysicalDiagram_1</div><div class="dh" style="left:46.7px;top:75.899px;width:8px"></div><div class="pm p" style="left:34.7px;top:69.899px"></div><div class="tr" style="left:83.5px;top:65.99900000000002px;letter-spacing:-1.017px">Users</div><div class="dh" style="left:46.7px;top:97.23199999999997px;width:8px"></div><div class="pm" style="left:34.7px;top:91.23199999999997px"></div><div class="tr" style="left:83.5px;top:87.332px;letter-spacing:-0.535px">Tables</div><div class="dh" style="left:72px;top:118.565px;width:8px"></div><div class="pm p" style="left:60px;top:112.565px"></div><div class="tr" style="left:109px;top:108.66500000000002px;letter-spacing:-0.369px">contact</div><div class="dh" style="left:72px;top:139.89800000000002px;width:8px"></div><div class="pm p" style="left:60px;top:133.89800000000002px"></div><div class="tr" style="left:109px;top:129.99800000000005px;letter-spacing:-0.894px">customer</div><div class="dh" style="left:72px;top:161.231px;width:8px"></div><div class="pm p" style="left:60px;top:155.231px"></div><div class="tr" style="left:109px;top:151.33100000000002px;letter-spacing:-0.862px">department</div><div class="dh" style="left:72px;top:182.56399999999996px;width:8px"></div><div class="pm p" style="left:60px;top:176.56399999999996px"></div><div class="tr" style="left:109px;top:172.664px;letter-spacing:-0.99px">employee</div><div class="dh" style="left:72px;top:203.897px;width:8px"></div><div class="pm p" style="left:60px;top:197.897px"></div><div class="tr" style="left:109px;top:193.997px;letter-spacing:-0.589px">fin_code</div><div class="dh" style="left:72px;top:225.23000000000002px;width:8px"></div><div class="pm p" style="left:60px;top:219.23000000000002px"></div><div class="tr" style="left:109px;top:215.33000000000004px;letter-spacing:-0.646px">fin_data</div><div class="dh" style="left:72px;top:246.563px;width:8px"></div><div class="pm p" style="left:60px;top:240.563px"></div><div class="tr" style="left:109px;top:236.663px;letter-spacing:-0.643px">product</div><div class="dh" style="left:72px;top:267.89599999999996px;width:8px"></div><div class="pm p" style="left:60px;top:261.89599999999996px"></div><div class="tr" style="left:109px;top:257.996px;letter-spacing:-0.9px">sales_order</div><div class="dh" style="left:72px;top:289.2289999999999px;width:8px"></div><div class="pm p" style="left:60px;top:283.2289999999999px"></div><div class="tr" style="left:109px;top:279.32899999999995px;letter-spacing:-0.847px">sales_order_it</div><div class="dh" style="left:46.7px;top:310.562px;width:8px"></div><div class="pm p" style="left:34.7px;top:304.562px"></div><div class="tr" style="left:83.5px;top:300.66200000000003px;letter-spacing:-0.677px">References</div><svg class="a" style="left:4.300000000000001px;top:0.5px" width="21.5" height="21.5" viewBox="0 0 21.500 21.500"><rect x="2.500" y="1" width="18" height="17" fill="#f4f8ff" stroke="#4b7be0" stroke-width="1.300"/><rect x="3" y="1.500" width="17" height="3" fill="#5f8fe8"/><rect x="4" y="6" width="6.500" height="11" fill="#e3ecfb"/><rect x="12" y="6" width="7.500" height="11" fill="#cfddf8"/><path d="M5 8h4M5 10h4" stroke="#9fb4dc" stroke-width=".8"/><path d="M.7 12h5.500l2.300 2.300v6.700h-7.800z" fill="#eef1fa" stroke="#5a6a98" stroke-width="1"/><path d="M6 12v2.500h2.500" fill="#2a3a68"/></svg><svg class="a" style="left:29.299999999999997px;top:21.80000000000001px" width="21.5" height="21.5" viewBox="0 0 21.500 21.500"><rect x=".7" y="1" width="8" height="6.500" fill="#dfeaff" stroke="#2f62e0" stroke-width="1.500"/><rect x=".7" y="1" width="8" height="2" fill="#2f62e0"/><rect x="12" y="14" width="8" height="6.500" fill="#dfeaff" stroke="#2f62e0" stroke-width="1.500"/><rect x="12" y="14" width="8" height="2" fill="#2f62e0"/><path d="M4.700 8.500v8h7" stroke="#2f56c8" stroke-width="1.500" fill="none"/><path d="M4.700 8l-2.500 3.300h5z" fill="#2f56c8"/><path d="M11.500 2.500v8c0 2 9.500 2 9.500 0v-8z" fill="#b9b9b9"/><ellipse cx="16.200" cy="2.500" rx="4.750" ry="1.700" fill="#dcdcdc" stroke="#9a9a9a" stroke-width=".5"/><path d="M11.500 5.300c0 2 9.500 2 9.500 0M11.500 8c0 2 9.500 2 9.500 0" stroke="#8a8a8a" stroke-width=".7" fill="none"/></svg><svg class="a" style="left:56.3px;top:45px" width="18.5" height="18" viewBox="0 0 18.500 18"><rect x=".6" y=".6" width="17.300" height="16.800" fill="#e2ebfa" stroke="#8b93a3" stroke-width="1.200"/><rect x="1.200" y="1.200" width="16" height="2" fill="#c3d2ee"/><rect x="2" y="4.500" width="5.500" height="4.500" fill="#e8f0ff" stroke="#2459d8" stroke-width="1.500"/><path d="M4.700 9.500v3h5" stroke="#2459d8" stroke-width="1.400" fill="none"/><path d="M9.500 8v6.500c0 1.800 7 1.800 7 0V8z" fill="#a9a9a9"/><ellipse cx="13" cy="8" rx="3.500" ry="1.400" fill="#d4d4d4" stroke="#8a8a8a" stroke-width=".4"/><path d="M9.500 10.500c0 1.600 7 1.600 7 0M9.500 12.700c0 1.600 7 1.600 7 0" stroke="#7e7e7e" stroke-width=".6" fill="none"/></svg><svg class="a" style="left:54.8px;top:67.59899999999999px" width="20.5" height="16.5" viewBox="0 0 20.500 16.500"><defs><linearGradient id="fg3" x1="0" y1="0" x2="1" y2="1"><stop offset="0" stop-color="#fdfdfd"/><stop offset=".45" stop-color="#d9d9d9"/><stop offset="1" stop-color="#7b7b7b"/></linearGradient></defs><path d="M.8 2.200c0-1 .6-1.500 1.500-1.500h5l1.700 2h10.700v12.600H.8z" fill="url(#fg3)" stroke="#a3a3a3" stroke-width=".7"/><path d="M.8 15.600h19.200" stroke="#4e4e4e" stroke-width="1.300"/><path d="M19.800 3v12.500" stroke="#6a6a6a" stroke-width=".9"/></svg><svg class="a" style="left:54.8px;top:88.93199999999996px" width="20.5" height="16.5" viewBox="0 0 20.500 16.500"><defs><linearGradient id="fg4" x1="0" y1="0" x2="1" y2="1"><stop offset="0" stop-color="#fdfdfd"/><stop offset=".45" stop-color="#d9d9d9"/><stop offset="1" stop-color="#7b7b7b"/></linearGradient></defs><path d="M.8 2.200c0-1 .6-1.500 1.500-1.500h5l1.700 2h10.700v12.600H.8z" fill="url(#fg4)" stroke="#a3a3a3" stroke-width=".7"/><path d="M.8 15.600h19.200" stroke="#4e4e4e" stroke-width="1.300"/><path d="M19.800 3v12.500" stroke="#6a6a6a" stroke-width=".9"/></svg><svg class="a" style="left:54.8px;top:302.262px" width="20.5" height="16.5" viewBox="0 0 20.500 16.500"><defs><linearGradient id="fg14" x1="0" y1="0" x2="1" y2="1"><stop offset="0" stop-color="#fdfdfd"/><stop offset=".45" stop-color="#d9d9d9"/><stop offset="1" stop-color="#7b7b7b"/></linearGradient></defs><path d="M.8 2.200c0-1 .6-1.500 1.500-1.500h5l1.700 2h10.700v12.600H.8z" fill="url(#fg14)" stroke="#a3a3a3" stroke-width=".7"/><path d="M.8 15.600h19.200" stroke="#4e4e4e" stroke-width="1.300"/><path d="M19.800 3v12.500" stroke="#6a6a6a" stroke-width=".9"/></svg><svg class="a" style="left:81.5px;top:108.26499999999999px" width="18.7" height="17.8" viewBox="0 0 18.700 17.800"><rect x=".7" y=".7" width="17.300" height="16.300" fill="#f7f9ff" stroke="#4d6cb6" stroke-width="1.300"/><rect x="1.300" y="1.300" width="16.100" height="2.700" fill="#5a84e2"/><rect x="12.300" y="4.300" width="5" height="12" fill="#c9d8f6"/><path d="M1.300 4.300h16M1.300 8.400h16M1.300 12.300h16M6.500 4.300v12.500M12 4.300v12.500" stroke="#9fb3dd" stroke-width="1"/><path d="M.7 17h17.300" stroke="#3d5693" stroke-width="1.400"/></svg><svg class="a" style="left:81.5px;top:129.598px" width="18.7" height="17.8" viewBox="0 0 18.700 17.800"><rect x=".7" y=".7" width="17.300" height="16.300" fill="#f7f9ff" stroke="#4d6cb6" stroke-width="1.300"/><rect x="1.300" y="1.300" width="16.100" height="2.700" fill="#5a84e2"/><rect x="12.300" y="4.300" width="5" height="12" fill="#c9d8f6"/><path d="M1.300 4.300h16M1.300 8.400h16M1.300 12.300h16M6.500 4.300v12.500M12 4.300v12.500" stroke="#9fb3dd" stroke-width="1"/><path d="M.7 17h17.300" stroke="#3d5693" stroke-width="1.400"/></svg><svg class="a" style="left:81.5px;top:150.93099999999998px" width="18.7" height="17.8" viewBox="0 0 18.700 17.800"><rect x=".7" y=".7" width="17.300" height="16.300" fill="#f7f9ff" stroke="#4d6cb6" stroke-width="1.300"/><rect x="1.300" y="1.300" width="16.100" height="2.700" fill="#5a84e2"/><rect x="12.300" y="4.300" width="5" height="12" fill="#c9d8f6"/><path d="M1.300 4.300h16M1.300 8.400h16M1.300 12.300h16M6.500 4.300v12.500M12 4.300v12.500" stroke="#9fb3dd" stroke-width="1"/><path d="M.7 17h17.300" stroke="#3d5693" stroke-width="1.400"/></svg><svg class="a" style="left:81.5px;top:172.26399999999995px" width="18.7" height="17.8" viewBox="0 0 18.700 17.800"><rect x=".7" y=".7" width="17.300" height="16.300" fill="#f7f9ff" stroke="#4d6cb6" stroke-width="1.300"/><rect x="1.300" y="1.300" width="16.100" height="2.700" fill="#5a84e2"/><rect x="12.300" y="4.300" width="5" height="12" fill="#c9d8f6"/><path d="M1.300 4.300h16M1.300 8.400h16M1.300 12.300h16M6.500 4.300v12.500M12 4.300v12.500" stroke="#9fb3dd" stroke-width="1"/><path d="M.7 17h17.300" stroke="#3d5693" stroke-width="1.400"/></svg><svg class="a" style="left:81.5px;top:193.59699999999998px" width="18.7" height="17.8" viewBox="0 0 18.700 17.800"><rect x=".7" y=".7" width="17.300" height="16.300" fill="#f7f9ff" stroke="#4d6cb6" stroke-width="1.300"/><rect x="1.300" y="1.300" width="16.100" height="2.700" fill="#5a84e2"/><rect x="12.300" y="4.300" width="5" height="12" fill="#c9d8f6"/><path d="M1.300 4.300h16M1.300 8.400h16M1.300 12.300h16M6.500 4.300v12.500M12 4.300v12.500" stroke="#9fb3dd" stroke-width="1"/><path d="M.7 17h17.300" stroke="#3d5693" stroke-width="1.400"/></svg><svg class="a" style="left:81.5px;top:214.93px" width="18.7" height="17.8" viewBox="0 0 18.700 17.800"><rect x=".7" y=".7" width="17.300" height="16.300" fill="#f7f9ff" stroke="#4d6cb6" stroke-width="1.300"/><rect x="1.300" y="1.300" width="16.100" height="2.700" fill="#5a84e2"/><rect x="12.300" y="4.300" width="5" height="12" fill="#c9d8f6"/><path d="M1.300 4.300h16M1.300 8.400h16M1.300 12.300h16M6.500 4.300v12.500M12 4.300v12.500" stroke="#9fb3dd" stroke-width="1"/><path d="M.7 17h17.300" stroke="#3d5693" stroke-width="1.400"/></svg><svg class="a" style="left:81.5px;top:236.26299999999998px" width="18.7" height="17.8" viewBox="0 0 18.700 17.800"><rect x=".7" y=".7" width="17.300" height="16.300" fill="#f7f9ff" stroke="#4d6cb6" stroke-width="1.300"/><rect x="1.300" y="1.300" width="16.100" height="2.700" fill="#5a84e2"/><rect x="12.300" y="4.300" width="5" height="12" fill="#c9d8f6"/><path d="M1.300 4.300h16M1.300 8.400h16M1.300 12.300h16M6.500 4.300v12.500M12 4.300v12.500" stroke="#9fb3dd" stroke-width="1"/><path d="M.7 17h17.300" stroke="#3d5693" stroke-width="1.400"/></svg><svg class="a" style="left:81.5px;top:257.59599999999995px" width="18.7" height="17.8" viewBox="0 0 18.700 17.800"><rect x=".7" y=".7" width="17.300" height="16.300" fill="#f7f9ff" stroke="#4d6cb6" stroke-width="1.300"/><rect x="1.300" y="1.300" width="16.100" height="2.700" fill="#5a84e2"/><rect x="12.300" y="4.300" width="5" height="12" fill="#c9d8f6"/><path d="M1.300 4.300h16M1.300 8.400h16M1.300 12.300h16M6.500 4.300v12.500M12 4.300v12.500" stroke="#9fb3dd" stroke-width="1"/><path d="M.7 17h17.300" stroke="#3d5693" stroke-width="1.400"/></svg><svg class="a" style="left:81.5px;top:278.9289999999999px" width="18.7" height="17.8" viewBox="0 0 18.700 17.800"><rect x=".7" y=".7" width="17.300" height="16.300" fill="#f7f9ff" stroke="#4d6cb6" stroke-width="1.300"/><rect x="1.300" y="1.300" width="16.100" height="2.700" fill="#5a84e2"/><rect x="12.300" y="4.300" width="5" height="12" fill="#c9d8f6"/><path d="M1.300 4.300h16M1.300 8.400h16M1.300 12.300h16M6.500 4.300v12.500M12 4.300v12.500" stroke="#9fb3dd" stroke-width="1"/><path d="M.7 17h17.300" stroke="#3d5693" stroke-width="1.400"/></svg><div class="a" style="left:195.5px;top:277px;width:10px;height:26px;background:#fff"></div><svg class="a" style="left:196px;top:276px" width="19" height="29" viewBox="0 0 16 24"><path d="M1 1v17l4-4 3.300 7.500 2.700-1.200-3.300-7.300h5.800z" fill="#fff" stroke="#505050" stroke-width="1.200"/></svg><div class="tr" style="left:205px;top:280.3px;color:#333">as</div><!--TREEICONS--></div></div></div>
<div class="a" style="left:1px;top:843px;width:330px;height:33px;background:#efebde"></div>
<div class="a" style="left:1px;top:845.5px;width:85px;height:30.500px;background:#fff;border-top:3px solid #f5a12c;border-radius:4px 4px 0 0;border-right:1px solid #9c9a90"></div>
<div class="btab" style="left:40.700px;top:853.300px;font-size:15.500px;letter-spacing:-0.312px">Local</div>
<div class="a" style="left:86.400px;top:848.300px;width:94px;height:27.700px;background:linear-gradient(#fff,#ece9dc);border:1px solid #c5c2b6;border-bottom:0;border-radius:3px 3px 0 0"></div>
<div class="btab" style="left:121.300px;top:851.300px;font-size:15.500px;letter-spacing:-0.895px">Glossary</div>
<div class="a" style="left:182.800px;top:848.300px;width:108.500px;height:27.700px;background:linear-gradient(#fff,#ece9dc);border:1px solid #c5c2b6;border-bottom:0;border-radius:3px 3px 0 0"></div>
<div class="btab" style="left:219.300px;top:851.300px;font-size:15.500px;letter-spacing:-0.659px">Repository</div>
<div class="a" style="left:1px;top:875px;width:330px;height:2px;background:#b4b2a8"></div>
<svg class="a" style="left:11.300px;top:851.900px" width="21.500" height="21.500" viewBox="0 0 20 20"><rect x="1.500" y="1" width="16" height="14" fill="#f2f6ff" stroke="#6f8fd8" stroke-width="1"/><rect x="2" y="1.500" width="15" height="2.800" fill="#5b8ae6"/><path d="M4 6.500h5M4 8.500h4" stroke="#9db3e0" stroke-width=".9"/><rect x=".7" y="10.500" width="7" height="7.500" fill="#e9eefb" stroke="#64719a" stroke-width="1"/><circle cx="11.300" cy="10.300" r="4.300" fill="#e9f0fb" stroke="#8c97ac" stroke-width="1.400"/><path d="M14.300 13.300l2 2" stroke="#8c97ac" stroke-width="1.800"/><circle cx="17" cy="16.500" r="2.300" fill="#c98a35" stroke="#9b651c" stroke-width=".6"/></svg>
<svg class="a" style="left:91.400px;top:849px" width="21.500" height="21.500" viewBox="0 0 20 20"><rect x="1.500" y="1" width="16" height="14" fill="#f2f6ff" stroke="#6f8fd8" stroke-width="1"/><rect x="2" y="1.500" width="15" height="2.800" fill="#5b8ae6"/><path d="M4 6.500h5M4 8.500h4" stroke="#9db3e0" stroke-width=".9"/><rect x=".7" y="10.500" width="7" height="7.500" fill="#e9eefb" stroke="#64719a" stroke-width="1"/><circle cx="11.300" cy="10.300" r="4.300" fill="#e9f0fb" stroke="#8c97ac" stroke-width="1.400"/><path d="M14.300 13.300l2 2" stroke="#8c97ac" stroke-width="1.800"/><circle cx="17" cy="16.500" r="2.300" fill="#c98a35" stroke="#9b651c" stroke-width=".6"/></svg>
<svg class="a" style="left:189.700px;top:849px" width="22" height="22" viewBox="0 0 20 20"><path d="M3 2.500v11c0 2 11 2 11 0v-11z" fill="#7fb2ee"/><ellipse cx="8.500" cy="2.800" rx="5.500" ry="1.800" fill="#a9cdf6"/><rect x=".7" y="10.500" width="6.500" height="7.500" fill="#e9eefb" stroke="#64719a" stroke-width="1"/><circle cx="10.800" cy="10.800" r="4.300" fill="#e9f0fb" stroke="#8c97ac" stroke-width="1.400"/><path d="M13.800 13.800l2 2" stroke="#8c97ac" stroke-width="1.800"/><circle cx="16.800" cy="16.800" r="2.300" fill="#c98a35" stroke="#9b651c" stroke-width=".6"/></svg>
<!--TABICONS-->
<style>
#dtab{position:absolute;height:23px;font-weight:bold;font-size:15px;color:#111;white-space:nowrap;letter-spacing:-0.1px}
#frame{position:absolute;background:#c8d9f7;border-radius:5px;border:1px solid #d9e5fa}
#canvas{position:absolute;background:#fff;overflow:hidden}
.sb{position:absolute;background:linear-gradient(#c9d8fb,#bccdf8);border:1px solid #fff;border-radius:3px;box-shadow:0 1px 0 #8fa6d8}
.tbl{position:absolute;background:#fff;border:3px solid #0f74c2;border-top-color:#1f6eae;box-shadow:5px 5px 0 #c0c0c0}
.tbl .h{position:absolute;left:0;top:0;right:0;height:28px;line-height:26px;border-bottom:4px solid #0f74c2;font-weight:bold;font-size:16px;letter-spacing:0.75px;color:#111;white-space:nowrap}
.tbl .h.s{font-family:"Liberation Serif",serif;font-size:17.5px;letter-spacing:0.8px;-webkit-text-stroke:0.35px #111;line-height:24.5px}
.c{position:absolute;font-size:12.5px;letter-spacing:0.95px;color:#111;white-space:nowrap;line-height:15px;height:15px}
.u{text-decoration:underline;text-underline-offset:1.5px}
.k{letter-spacing:0.2px}
.c i{font-style:normal;letter-spacing:-0.9px}
.c b{font-weight:normal;letter-spacing:-0.5px}
</style>
<svg class="a" style="left:343px;top:71px" width="232" height="25" viewBox="0 0 232 25"><defs><linearGradient id="tg" x1="0" y1="0" x2="0" y2="1"><stop offset="0" stop-color="#fdfeff"/><stop offset="1" stop-color="#cfdef8"/></linearGradient></defs><path d="M0 24.5 C10 22 14 14 20 6 C23 2 26 1.5 30 1.5 H222 Q226 1.5 226 5.5 V24.5 Z" fill="url(#tg)" stroke="#d4e0f6" stroke-width="1"/></svg><div id="dtab" style="left:379.3px;top:74px;letter-spacing:0.274px">MainPhysicalDiagram_1</div><svg class="a" style="left:1625px;top:74px" width="44" height="16" viewBox="0 0 44 16"><path d="M3 3.5h11v2.2h-11zM3 8h11l-5.5 5.5z" fill="#111"/><path d="M27 3l10 10M37 3l-10 10" stroke="#111" stroke-width="1.8"/></svg><div id="frame" style="left:339px;top:94px;width:1331px;height:783px"></div><div class="a" style="left:345px;top:100px;width:1318px;height:770px;background:#fff"></div><div class="a" style="left:1640px;top:100px;width:23px;height:749px;background:linear-gradient(90deg,#efeeea,#fbfaf8 50%,#fff)"></div><div class="a" style="left:345px;top:849px;width:1295px;height:21px;background:linear-gradient(#f1efe9,#fbfaf7 50%,#fff)"></div><div class="a" style="left:1640px;top:849px;width:23px;height:21px;background:#efebdc"></div><div class="sb" style="left:1642.3px;top:100.69999999999999px;width:20px;height:20.5px"><svg width="18" height="18.5" viewBox="0 0 18 18" style="position:absolute;left:0;top:0"><path d="M4.5 11.5L9 7l4.5 4.5" stroke="#4d6185" stroke-width="2.6" fill="none"/></svg></div><div class="sb" style="left:1642.5px;top:827px;width:19.5px;height:20px"><svg width="17.5" height="18" viewBox="0 0 18 18" style="position:absolute;left:0;top:0"><path d="M4.5 7L9 11.5l4.5-4.5" stroke="#4d6185" stroke-width="2.6" fill="none"/></svg></div><div class="sb" style="left:346.5px;top:850.5px;width:20px;height:19px"><svg width="18" height="17" viewBox="0 0 18 18" style="position:absolute;left:0;top:0"><path d="M11.5 4.5L7 9l4.5 4.5" stroke="#4d6185" stroke-width="2.6" fill="none"/></svg></div><div class="sb" style="left:1619.5px;top:850.5px;width:19.5px;height:19px"><svg width="17.5" height="17" viewBox="0 0 18 18" style="position:absolute;left:0;top:0"><path d="M7 4.5L11.5 9L7 13.5" stroke="#4d6185" stroke-width="2.6" fill="none"/></svg></div><div class="sb" style="left:1642.5px;top:466px;width:19px;height:15px"></div><div class="sb" style="left:969px;top:850.5px;width:48px;height:19px"><div class="a" style="left:19px;top:5px;width:9px;height:7px;background:repeating-linear-gradient(90deg,#9fb3e6 0 1px,#e6edff 1px 2px)"></div></div><div id="canvas" style="left:345px;top:100px;width:1295px;height:749px"><svg class="a" style="left:0;top:0" width="1295" height="749" viewBox="0 0 1295 749"><path d="M268.5 294L619.7 194.6" stroke="#3283c4" stroke-width="1.25" fill="none"/><path d="M619.7 194.6L603.8 203.78L601.35 195.12Z" fill="#0a74c8"/><path d="M637 195L525.1 293.6" stroke="#3283c4" stroke-width="1.25" fill="none"/><path d="M525.1 293.6L535.48 278.46L541.43 285.21Z" fill="#0a74c8"/><path d="M652.5 195L777.2 293.4" stroke="#3283c4" stroke-width="1.25" fill="none"/><path d="M777.2 293.4L760.44 285.91L766.01 278.84Z" fill="#0a74c8"/><path d="M666.5 195L1025 294.5" stroke="#3283c4" stroke-width="1.25" fill="none"/><path d="M1025 294.5L1006.64 294.08L1009.05 285.4Z" fill="#0a74c8"/><path d="M264 417L264 588" stroke="#3283c4" stroke-width="1.25" fill="none"/><path d="M264 587L259.5 569.2L268.5 569.2Z" fill="#0a74c8"/><path d="M779.6 489L779.6 588" stroke="#3283c4" stroke-width="1.25" fill="none"/><path d="M779.6 587L775.1 569.2L784.1 569.2Z" fill="#0a74c8"/><path d="M779.6 489.6L784.1 507.4L775.1 507.4Z" fill="#0a74c8"/><path d="M1030.6 385L1030.6 588" stroke="#3283c4" stroke-width="1.25" fill="none"/><path d="M1030.6 385.4L1035.1 403.2L1026.1 403.2Z" fill="#0a74c8"/></svg><div class="tbl" style="left:549px;top:51px;width:188px;height:138px"><div class="h"><span style="position:absolute;left:41.7px;letter-spacing:0.846px">sales_order</span></div><span class="c u" style="left:3.7px;top:29.87px">id</span><span class="c u" style="left:89.3px;top:29.87px">integer</span><span class="c k u" style="left:144.5px;top:29.87px">&lt;pk&gt;</span><span class="c" style="left:3.7px;top:47.14px">cu<b>s</b>t_id</span><span class="c" style="left:89.3px;top:47.14px">integer</span><span class="c k" style="left:144.5px;top:47.14px">&lt;fk3&gt;</span><span class="c" style="left:3.7px;top:64.41px">order_date</span><span class="c" style="left:89.3px;top:64.41px">date</span><span class="c" style="left:3.7px;top:81.68px">fin_code_id</span><span class="c" style="left:89.3px;top:81.68px">cha<i>r</i>(2)</span><span class="c k" style="left:144.5px;top:81.68px">&lt;fk2&gt;</span><span class="c" style="left:3.7px;top:98.95px">region</span><span class="c" style="left:89.3px;top:98.95px">cha<i>r</i>(7)</span><span class="c" style="left:3.7px;top:116.22px"><b>s</b>ale<b>s</b>_rep</span><span class="c" style="left:89.3px;top:116.22px">integer</span><span class="c k" style="left:144.5px;top:116.22px">&lt;fk1&gt;</span></div><div class="tbl" style="left:163px;top:293px;width:199px;height:121px"><div class="h"><span style="position:absolute;left:20.3px;letter-spacing:0.842px">sales_order_items</span></div><span class="c u" style="left:4.7px;top:29.87px">id</span><span class="c u" style="left:77.0px;top:29.87px">integer</span><span class="c k u" style="left:137.7px;top:29.87px">&lt;pk,fk2&gt;</span><span class="c u" style="left:4.7px;top:47.14px">line_id</span><span class="c u" style="left:77.0px;top:47.14px"><b>s</b>mallint</span><span class="c k u" style="left:137.7px;top:47.14px">&lt;pk&gt;</span><span class="c" style="left:4.7px;top:64.41px">prod_id</span><span class="c" style="left:77.0px;top:64.41px">integer</span><span class="c k" style="left:137.7px;top:64.41px">&lt;fk1&gt;</span><span class="c" style="left:4.7px;top:81.68px">quantity</span><span class="c" style="left:77.0px;top:81.68px">integer</span><span class="c" style="left:4.7px;top:98.95px"><b>s</b>hip_date</span><span class="c" style="left:77.0px;top:98.95px">date</span></div><div class="tbl" style="left:413px;top:293px;width:219px;height:191px"><div class="h"><span style="position:absolute;left:68.1px;letter-spacing:0.681px">customer</span></div><span class="c u" style="left:5.0px;top:29.87px">id</span><span class="c u" style="left:117.0px;top:29.87px">integer</span><span class="c k u" style="left:178.8px;top:29.87px">&lt;pk&gt;</span><span class="c" style="left:5.0px;top:47.14px">fname</span><span class="c" style="left:117.0px;top:47.14px">cha<i>r</i>(15)</span><span class="c" style="left:5.0px;top:64.41px">lname</span><span class="c" style="left:117.0px;top:64.41px">cha<i>r</i>(20)</span><span class="c" style="left:5.0px;top:81.68px">addre<b>s</b><b>s</b></span><span class="c" style="left:117.0px;top:81.68px">cha<i>r</i>(35)</span><span class="c" style="left:5.0px;top:98.95px">city</span><span class="c" style="left:117.0px;top:98.95px">cha<i>r</i>(20)</span><span class="c" style="left:5.0px;top:116.22px"><b>s</b>tate</span><span class="c" style="left:117.0px;top:116.22px">cha<i>r</i>(16)</span><span class="c" style="left:5.0px;top:133.49px">zip</span><span class="c" style="left:117.0px;top:133.49px">cha<i>r</i>(10)</span><span class="c" style="left:5.0px;top:150.76px">phone</span><span class="c" style="left:117.0px;top:150.76px">cha<i>r</i>(12)</span><span class="c" style="left:5.0px;top:168.03px">company_name</span><span class="c" style="left:117.0px;top:168.03px">cha<i>r</i>(35)</span></div><div class="tbl" style="left:682px;top:293px;width:193px;height:191px"><div class="h"><span style="position:absolute;left:52.7px;letter-spacing:1.37px">employee</span></div><span class="c u" style="left:6.0px;top:29.87px">emp_id</span><span class="c u" style="left:92.6px;top:29.87px">integer</span><span class="c k u" style="left:154.1px;top:29.87px">&lt;pk&gt;</span><span class="c" style="left:6.0px;top:47.14px">manager_id</span><span class="c" style="left:92.6px;top:47.14px">integer</span><span class="c" style="left:6.0px;top:64.41px">emp_fname</span><span class="c" style="left:92.6px;top:64.41px">cha<i>r</i>(20)</span><span class="c" style="left:6.0px;top:81.68px">emp_lname</span><span class="c" style="left:92.6px;top:81.68px">cha<i>r</i>(20)</span><span class="c" style="left:6.0px;top:98.95px">dept_id</span><span class="c" style="left:92.6px;top:98.95px">integer</span><span class="c k" style="left:154.1px;top:98.95px">&lt;fk&gt;</span><span class="c" style="left:6.0px;top:116.22px"><b>s</b>treet</span><span class="c" style="left:92.6px;top:116.22px">cha<i>r</i>(40)</span><span class="c" style="left:6.0px;top:133.49px">city</span><span class="c" style="left:92.6px;top:133.49px">cha<i>r</i>(20)</span><span class="c" style="left:6.0px;top:150.76px"><b>s</b>tate</span><span class="c" style="left:92.6px;top:150.76px">cha<i>r</i>(16)</span><span class="c" style="left:6.0px;top:168.03px">zip_code</span><span class="c" style="left:92.6px;top:168.03px">cha<i>r</i>(10)</span></div><div class="tbl" style="left:938px;top:293px;width:184px;height:87px"><div class="h"><span style="position:absolute;left:52.4px;letter-spacing:0.958px">fin_code</span></div><span class="c u" style="left:3.5px;top:29.87px">code</span><span class="c u" style="left:82.5px;top:29.87px">cha<i>r</i>(2)</span><span class="c k u" style="left:143.8px;top:29.87px">&lt;pk&gt;</span><span class="c" style="left:3.5px;top:47.14px">type</span><span class="c" style="left:82.5px;top:47.14px">cha<i>r</i>(10)</span><span class="c" style="left:3.5px;top:64.41px">de<b>s</b>cription</span><span class="c" style="left:82.5px;top:64.41px">cha<i>r</i>(50)</span></div><div class="tbl" style="left:171px;top:588px;width:184px;height:104px"><div class="h s"><span style="position:absolute;left:57.2px;letter-spacing:1.033px">product</span></div><span class="c u" style="left:3.9px;top:29.87px">id</span><span class="c u" style="left:82.8px;top:29.87px">integer</span><span class="c k u" style="left:144.7px;top:29.87px">&lt;pk&gt;</span><span class="c" style="left:3.9px;top:47.14px">name</span><span class="c" style="left:82.8px;top:47.14px">cha<i>r</i>(15)</span><span class="c" style="left:3.9px;top:64.41px">de<b>s</b>cription</span><span class="c" style="left:82.8px;top:64.41px">cha<i>r</i>(30)</span><span class="c" style="left:3.9px;top:81.68px"><b>s</b>ize</span><span class="c" style="left:82.8px;top:81.68px">cha<i>r</i>(18)</span></div><div class="tbl" style="left:416px;top:565px;width:182px;height:104px"><div class="h s"><span style="position:absolute;left:58.4px;letter-spacing:1.227px">contact</span></div><span class="c u" style="left:4.2px;top:29.87px">id</span><span class="c u" style="left:81.2px;top:29.87px">integer</span><span class="c k u" style="left:142.5px;top:29.87px">&lt;pk&gt;</span><span class="c" style="left:4.2px;top:47.14px">la<b>s</b>t_name</span><span class="c" style="left:81.2px;top:47.14px">cha<i>r</i>(15)</span><span class="c" style="left:4.2px;top:64.41px">fir<b>s</b>t_name</span><span class="c" style="left:81.2px;top:64.41px">cha<i>r</i>(15)</span><span class="c" style="left:4.2px;top:81.68px">title</span><span class="c" style="left:81.2px;top:81.68px">cha<i>r</i>(16)</span></div><div class="tbl" style="left:676px;top:588px;width:205px;height:86px"><div class="h"><span style="position:absolute;left:52.2px;letter-spacing:1.208px">department</span></div><span class="c u" style="left:5.0px;top:29.87px">dept_id</span><span class="c u" style="left:104.0px;top:29.87px">integer</span><span class="c k u" style="left:165.8px;top:29.87px">&lt;pk&gt;</span><span class="c" style="left:5.0px;top:47.14px">dept_name</span><span class="c" style="left:104.0px;top:47.14px">cha<i>r</i>(40)</span><span class="c" style="left:5.0px;top:64.41px">dept_head_id</span><span class="c" style="left:104.0px;top:64.41px">integer</span><span class="c k" style="left:165.8px;top:64.41px">&lt;fk&gt;</span></div><div class="tbl" style="left:933px;top:588px;width:194px;height:104px"><div class="h"><span style="position:absolute;left:59.7px;letter-spacing:1.079px">fin_data</span></div><span class="c u" style="left:4.4px;top:29.87px">year</span><span class="c u" style="left:63.2px;top:29.87px">cha<i>r</i>(4)</span><span class="c k u" style="left:141.0px;top:29.87px">&lt;pk&gt;</span><span class="c u" style="left:4.4px;top:47.14px">quarter</span><span class="c u" style="left:63.2px;top:47.14px">cha<i>r</i>(2)</span><span class="c k u" style="left:141.0px;top:47.14px">&lt;pk&gt;</span><span class="c u" style="left:4.4px;top:64.41px">code</span><span class="c u" style="left:63.2px;top:64.41px">cha<i>r</i>(2)</span><span class="c k u" style="left:141.0px;top:64.41px">&lt;pk,fk&gt;</span><span class="c" style="left:4.4px;top:81.68px">amount</span><span class="c" style="left:63.2px;top:81.68px">numeri<i>c</i>(9)</span></div></div><div class="a" style="left:1673px;top:71.5px;width:25px;height:81px;background:linear-gradient(90deg,#fff,#f4f3f0 60%,#e6e4dc);border:1px solid #b5b3a8;border-right:0;border-radius:5px 0 0 5px"></div><div class="a" style="left:1693px;top:98px;font-size:15px;color:#222;transform-origin:0 0;transform:rotate(90deg);white-space:nowrap;letter-spacing:0.042px">Toolbox</div><div class="a" style="left:0;top:878px;width:1698px;height:36px;background:linear-gradient(#fcfcfc,#efefef 40%,#d9d9d9);border-top:1px solid #fff"></div><div class="a" style="left:14.5px;top:888px;font-size:15px;color:#222;letter-spacing:-0.372px">Ready</div><div class="a" style="left:1404.5px;top:883.5px;width:276px;height:27px;border:1px solid #8a8a8a;border-right-color:#fff;border-bottom-color:#fff;box-shadow:inset 1px 1px 0 #c8c8c8"></div><div class="a" style="left:1419.7px;top:888px;font-size:15.5px;color:#222;letter-spacing:-0.467px;white-space:nowrap">Sybase AS Anywhere 9 (Deprecated)</div><svg class="a" style="left:1683px;top:897px" width="14" height="14" viewBox="0 0 14 14"><g fill="#b8b6ac"><rect x="9" y="1" width="2" height="2"/><rect x="9" y="5" width="2" height="2"/><rect x="5" y="5" width="2" height="2"/><rect x="9" y="9" width="2" height="2"/><rect x="5" y="9" width="2" height="2"/><rect x="1" y="9" width="2" height="2"/></g></svg></div></div></body></html>
